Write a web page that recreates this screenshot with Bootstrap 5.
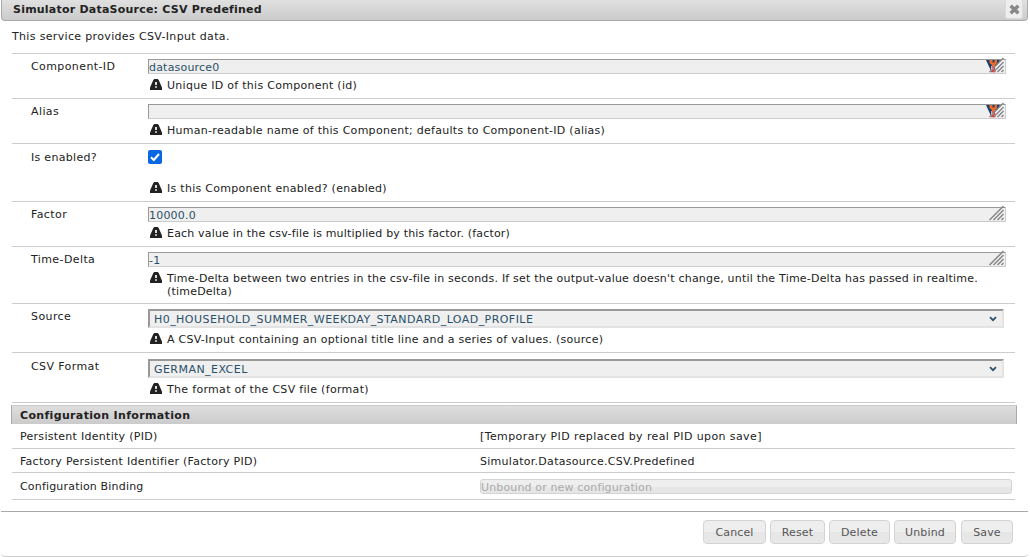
<!DOCTYPE html>
<html lang="en">
<head>
<meta charset="utf-8">
<title>Simulator DataSource: CSV Predefined</title>
<link href="https://cdn.jsdelivr.net/npm/bootstrap@5.3.0/dist/css/bootstrap.min.css" rel="stylesheet">
<style>
body{font:11px/13px "DejaVu Sans",sans-serif;letter-spacing:.28px;color:#222;background:#fff;overflow:hidden}
.dialog{height:557px;border-bottom:1px solid #ccc;margin:0 1px;width:1027px;border-radius:0 0 4px 4px}
.titlebar{height:21px;padding:0 4px 2px 11px;background:linear-gradient(#e0e0e0,#cbcbcb);border:1px solid #aaa;border-top:0;border-radius:0 0 4px 4px;font-weight:700;letter-spacing:.22px}
.titlebar .caption{padding-top:3px}
.close-x{width:18px;height:19px;background:#eee;border:1px solid #dadada;border-top:0;border-radius:0 0 3px 3px}
.intro{height:32px;padding:9px 0 0 11px;letter-spacing:.34px}
.props{margin:0 13px 0 11px}
.prop{display:grid;grid-template-columns:117px 1fr;border-top:1px solid #ccc;height:45px;padding:5px 9px 0 19px}
.prop>.name{white-space:nowrap;letter-spacing:.4px;padding-top:1px}
.field{height:15px;border:1px solid #ccc;border-top-color:#999;border-left-color:#999;background:#efefef;color:#2b4f69;padding:1px 0 0 0;position:relative;letter-spacing:.2px}
.field svg{position:absolute;right:0;top:-3px}
.pick{height:19px;width:856px;border:2px solid #e3e3e3;border-top-color:#999;border-left-color:#999;background:#efefef;color:#2b4f69;padding:1px 5px 0 4px;letter-spacing:.45px}
.hint{display:flex;padding:5px 0 0 2px}
.hint svg{flex:none;margin:0 5px 0 0}
.tick{display:block;margin-top:1px}
.enabled .name{padding-top:2px;letter-spacing:.3px}
.enabled .hint{padding-top:18px}
.tight{letter-spacing:.18px}
.mid{letter-spacing:.206px}
.ls-wide{letter-spacing:.4px}
.confhead{height:19px;margin:2px 11px 0 10px;padding:3px 8px;border:1px solid #aaa;border-top-color:#ccc;border-bottom:0;background:linear-gradient(#dedede,#cbcbcb);font-weight:700;letter-spacing:.34px}
.info{display:grid;grid-template-columns:460px 1fr;border-bottom:1px solid #ccc;padding:6px 3px 0 8px}
.binding>span{padding-top:1px}
.bound{height:15px;border:1px solid #d3d3d3;border-radius:3px;background:linear-gradient(#eee 50%,#e6e6e6 50%);color:#aaa;letter-spacing:.14px;padding-top:1px}
.buttons{margin-top:11px;border-top:1px solid #aaa;padding:8px 15px 0}
.ubtn{--bs-btn-padding-x:0;--bs-btn-padding-y:0;--bs-btn-font-size:11px;--bs-btn-line-height:23px;height:24px;border:1px solid #d3d3d3;border-radius:4px;background:linear-gradient(#eee 50%,#e6e6e6 50%,#e8e8e8);color:#555;letter-spacing:.15px}
</style>
</head>
<body>
<svg width="0" height="0" class="position-absolute"><defs>
<symbol id="warn" viewBox="0 0 12 11"><path d="M4.300 0h3.400l1 1 3.300 7.500V11H0V8.500L3.300 1z" fill="#222"/><path d="M5 3h2v3H5zM5 7.300h2v1.500H5z" fill="#ddd"/></symbol>
<symbol id="grip" viewBox="0 0 20 16"><g stroke="#888" stroke-width="1.500" fill="none"><path d="M4.500 15 18.500 1M8.500 15 18.500 5M12.500 15 18.500 9M16.500 15 18.500 13"/></g></symbol>
<symbol id="badge" viewBox="0 0 20 16"><path d="M1 3h14l-3 6H7l1 6H6.500z" fill="#17426a"/><path d="M4.500 3h7.500v3L10 8v2H7V8L4.500 6z" fill="#f26a2a"/><path d="M7.500 3h2v2.500h-2z" fill="#17426a"/><path d="M6 9h4l2-1 5-5h2L8 15.500H6.500z" fill="#fff"/><path d="M6.500 10h3v2L7 14.500h3.500" stroke="#e22" fill="none" stroke-width="1.300"/></symbol>
<symbol id="chev" viewBox="0 0 8 6"><path d="M1 1.200 4 4.200 7 1.200" fill="none" stroke="#2b4f69" stroke-width="1.700"/></symbol>
</defs></svg>
<div class="dialog">
<div class="titlebar d-flex justify-content-between"><span class="caption">Simulator DataSource: CSV Predefined</span>
<span class="close-x d-flex align-items-center justify-content-center"><svg width="11" height="11" viewBox="0 0 10 10"><path d="M1.500 1.500l7 7M8.500 1.500l-7 7" stroke="#888" stroke-width="3.200"/></svg></span></div>
<div class="intro">This service provides CSV-Input data.</div>
<div class="props">
<div class="prop"><div class="name">Component-ID</div><div><div class="field">datasource0<svg width="20" height="16"><use href="#badge"/><use href="#grip"/></svg></div><div class="hint"><svg width="12" height="11"><use href="#warn"/></svg><span>Unique ID of this Component (id)</span></div></div></div>
<div class="prop"><div class="name">Alias</div><div><div class="field"><svg width="20" height="16"><use href="#badge"/><use href="#grip"/></svg></div><div class="hint"><svg width="12" height="11"><use href="#warn"/></svg><span>Human-readable name of this Component; defaults to Component-ID (alias)</span></div></div></div>
<div class="prop enabled" style="height:58px"><div class="name">Is enabled?</div><div><svg class="tick" width="14" height="14" viewBox="0 0 14 14"><rect width="14" height="14" rx="2" fill="#0b66e4"/><path d="M3 7.300 5.800 10 11 4" fill="none" stroke="#fff" stroke-width="2"/></svg><div class="hint"><svg width="12" height="11"><use href="#warn"/></svg><span>Is this Component enabled? (enabled)</span></div></div></div>
<div class="prop"><div class="name">Factor</div><div><div class="field">10000.0<svg width="20" height="16"><use href="#grip"/></svg></div><div class="hint"><svg width="12" height="11"><use href="#warn"/></svg><span class="tight">Each value in the csv-file is multiplied by this factor. (factor)</span></div></div></div>
<div class="prop" style="height:57px"><div class="name">Time-Delta</div><div><div class="field">-1<svg width="20" height="16"><use href="#grip"/></svg></div><div class="hint"><svg width="12" height="11"><use href="#warn"/></svg><span class="mid">Time-Delta between two entries in the csv-file in seconds. If set the output-value doesn't change, until the Time-Delta has passed in realtime.<br>(timeDelta)</span></div></div></div>
<div class="prop" style="height:49px"><div class="name">Source</div><div><div class="pick d-flex justify-content-between align-items-center">H0_HOUSEHOLD_SUMMER_WEEKDAY_STANDARD_LOAD_PROFILE<svg width="8" height="6"><use href="#chev"/></svg></div><div class="hint"><svg width="12" height="11"><use href="#warn"/></svg><span style="letter-spacing:.26px">A CSV-Input containing an optional title line and a series of values. (source)</span></div></div></div>
<div class="prop" style="height:50px;padding-top:6px"><div class="name">CSV Format</div><div><div class="pick d-flex justify-content-between align-items-center">GERMAN_EXCEL<svg width="8" height="6"><use href="#chev"/></svg></div><div class="hint"><svg width="12" height="11"><use href="#warn"/></svg><span class="format-hint" style="letter-spacing:.31px">The format of the CSV file (format)</span></div></div></div>
<div class="border-top" style="border-color:#ccc!important"></div>
</div>
<div class="confhead">Configuration Information</div>
<div class="props">
<div class="info" style="height:25px"><span>Persistent Identity (PID)</span><span class="ls-wide">[Temporary PID replaced by real PID upon save]</span></div>
<div class="info" style="height:24px"><span>Factory Persistent Identifier (Factory PID)</span><span>Simulator.Datasource.CSV.Predefined</span></div>
<div class="info binding" style="height:27px"><span class="tight">Configuration Binding</span><div class="bound">Unbound or new configuration</div></div>
</div>
<div class="buttons d-flex justify-content-end"><button class="btn ubtn" style="width:63px;margin-right:4px">Cancel</button><button class="btn ubtn" style="width:55px;margin-right:4px">Reset</button><button class="btn ubtn" style="width:61px;margin-right:4px">Delete</button><button class="btn ubtn" style="width:62px;margin-right:5px">Unbind</button><button class="btn ubtn" style="width:52px">Save</button></div>
</div>
<script src="https://cdn.jsdelivr.net/npm/bootstrap@5.3.0/dist/js/bootstrap.bundle.min.js"></script>
</body>
</html>
